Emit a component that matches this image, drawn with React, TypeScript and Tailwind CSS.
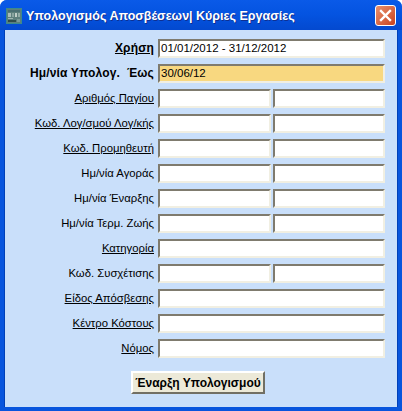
const rows = [
  { label: "Χρήση", value: "01/01/2012 - 31/12/2012", kind: "bold-link" },
  { label: "Ημ/νία Υπολογ.  Έως", value: "30/06/12", kind: "bold", yellow: true },
  { label: "Αριθμός Παγίου", split: true, kind: "link" },
  { label: "Κωδ. Λογ/σμού Λογ/κής", split: true, kind: "link" },
  { label: "Κωδ. Προμηθευτή", split: true, kind: "link" },
  { label: "Ημ/νία Αγοράς", split: true, kind: "plain" },
  { label: "Ημ/νία Έναρξης", split: true, kind: "plain" },
  { label: "Ημ/νία Τερμ. Ζωής", split: true, kind: "plain" },
  { label: "Κατηγορία", kind: "link" },
  { label: "Κωδ. Συσχέτισης", split: true, kind: "plain" },
  { label: "Είδος Απόσβεσης", kind: "link" },
  { label: "Κέντρο Κόστους", kind: "link" },
  { label: "Νόμος", kind: "link" },
];

function Field({ value, yellow, className }: { value?: string; yellow?: boolean; className?: string }) {
  return (
    <div
      className={`h-[19px] border-2 border-t-[#7f7b6e] border-l-[#7f7b6e] border-r-[#f1efe2] border-b-[#f1efe2] pl-[1px] text-[11.5px] leading-[15px] text-black ${yellow ? "bg-[#f8d880]" : "bg-white"} ${className ?? ""}`}
    >
      {value}
    </div>
  );
}

export default function App() {
  return (
    <div className="flex h-[411px] w-[402px] flex-col overflow-hidden rounded-t-[7px] bg-[#0855dd] font-['Liberation_Sans',sans-serif]">
      <div className="flex h-[30px] shrink-0 items-center bg-gradient-to-b from-[#0a5ae8] via-[#0453e0] to-[#0349cf] px-[6px] pt-[2px]">
        <svg width="16" height="16" viewBox="0 0 16 16" className="shrink-0">
          <rect width="16" height="16" fill="#3d8a8c" />
          <rect x="1" y="1" width="14" height="14" fill="#5d7f7c" />
          <rect x="2" y="2" width="12" height="2" fill="#4a6f72" />
          <rect x="2" y="5" width="3" height="4" fill="#a9bdb8" />
          <rect x="6" y="5" width="2" height="4" fill="#8aa5a0" />
          <rect x="9" y="5" width="2" height="4" fill="#c0cec8" />
          <rect x="12" y="5" width="2" height="4" fill="#93aca6" />
          <rect x="2" y="10" width="5" height="1" fill="#9fb5b0" />
          <rect x="2" y="12" width="8" height="2" fill="#2f4c4a" />
          <rect x="11" y="11" width="3" height="3" fill="#7d9a96" />
        </svg>
        <div className="ml-[4px] flex-1 whitespace-pre text-[12.5px] font-bold text-white [text-shadow:1px_1px_0_#0f2f90]">
          Υπολογισμός Αποσβέσεων| Κύριες Εργασίες
        </div>
        <div className="-mt-[2px] flex h-[21px] w-[21px] items-center justify-center rounded-[3px] border border-white bg-gradient-to-br from-[#e8906c] to-[#c8401c]">
          <svg width="13" height="13" viewBox="0 0 13 13">
            <path d="M2 2 L11 11 M11 2 L2 11" stroke="#ffffff" strokeWidth="2.4" strokeLinecap="square" />
          </svg>
        </div>
      </div>
      <div className="mx-[4px] mb-[4px] flex flex-1 flex-col border-l border-r border-[#0040b8] bg-[#c9dffa] pr-[12px] pt-[9px]">
        <div className="flex flex-col gap-[6px]">
          {rows.map((r) => (
            <div key={r.label} className="flex items-center">
              <div
                className={`w-[153px] shrink-0 whitespace-pre pr-[4px] text-right leading-[15px] text-black ${r.kind === "bold" || r.kind === "bold-link" ? "text-[12px] font-bold tracking-[0.15px]" : "text-[11.3px]"} ${r.kind === "link" || r.kind === "bold-link" ? "underline" : ""}`}
              >
                {r.label}
              </div>
              {r.split ? (
                <div className="flex flex-1 gap-[2px]">
                  <Field className="w-[113px]" />
                  <Field className="flex-1" />
                </div>
              ) : (
                <Field className="flex-1" value={r.value} yellow={r.yellow} />
              )}
            </div>
          ))}
        </div>
        <div className="mt-[13px] flex">
          <div className="ml-[126px] flex h-[23px] w-[134px] items-center justify-center whitespace-nowrap border-2 border-t-white border-l-white border-r-[#716f64] border-b-[#716f64] bg-[#ece9d8] text-[12px] font-bold text-black">
            Έναρξη Υπολογισμού
          </div>
        </div>
      </div>
    </div>
  );
}
